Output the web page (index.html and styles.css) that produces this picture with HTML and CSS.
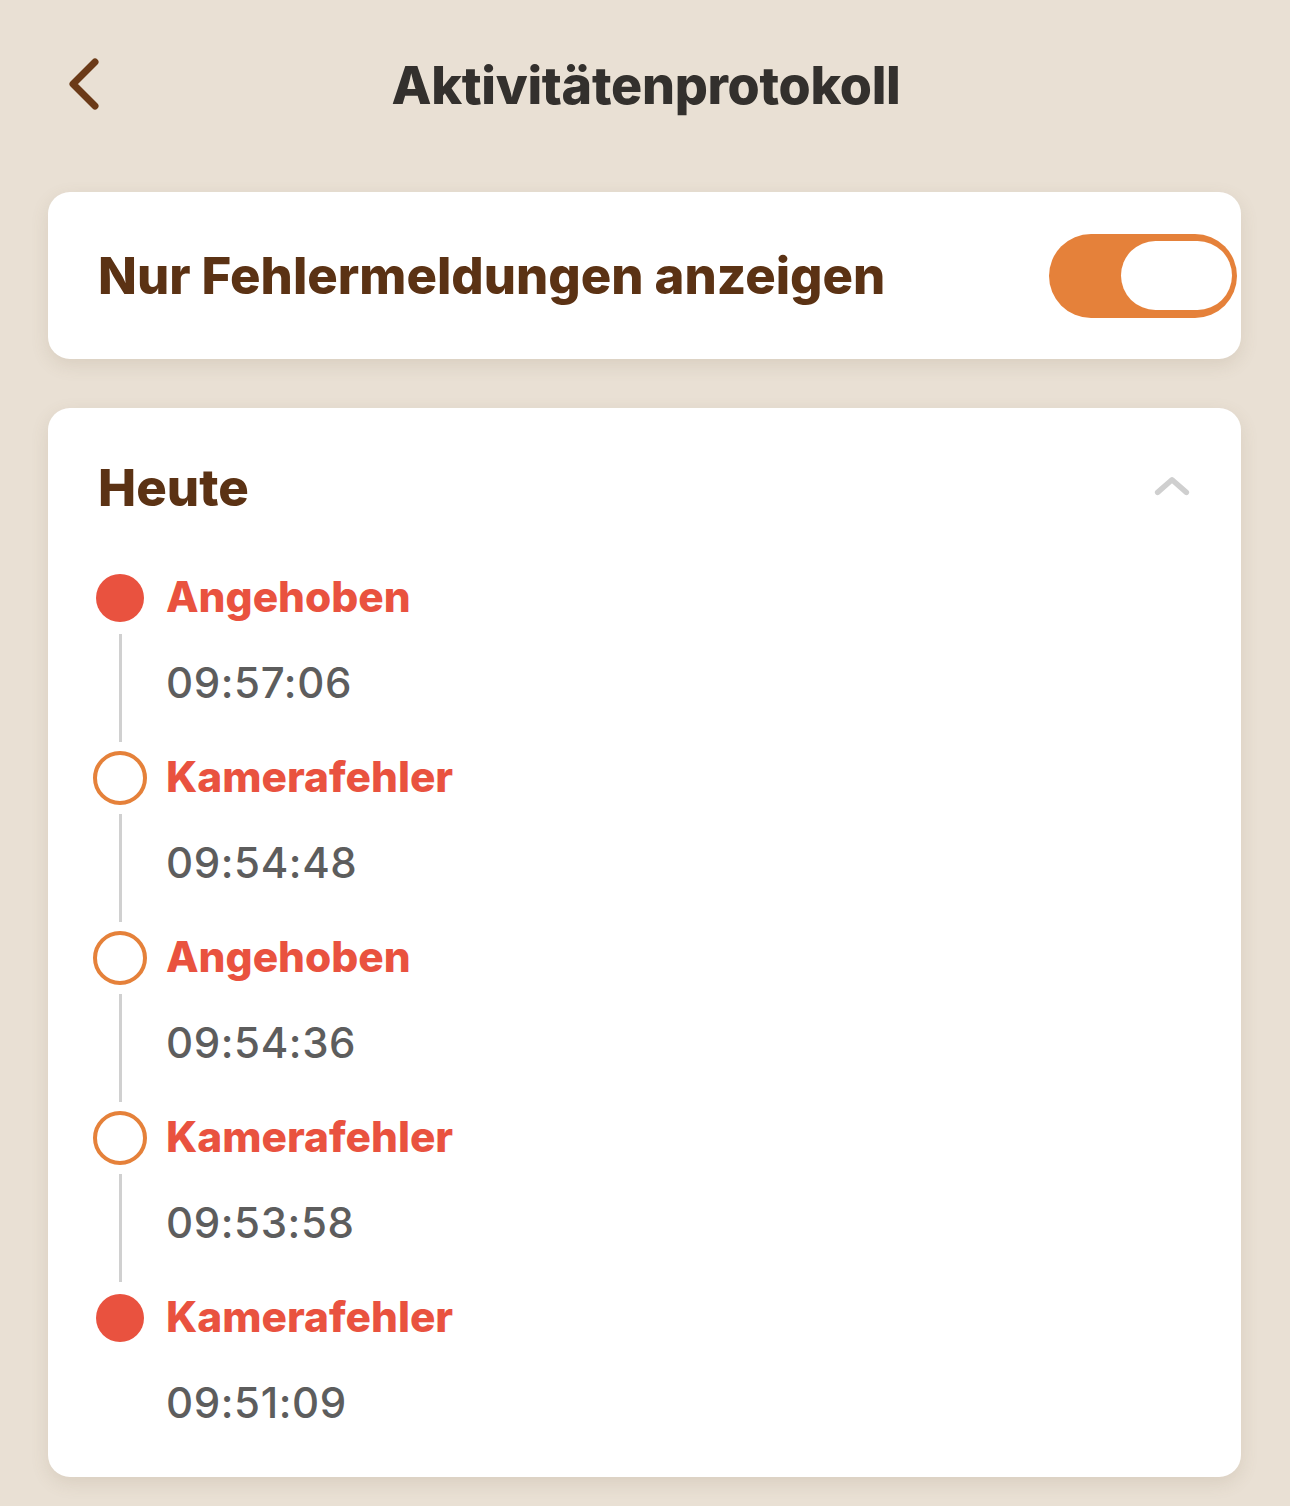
FILE: index.html
```html
<!DOCTYPE html>
<html lang="de">
<head>
  <meta charset="UTF-8">
  <meta name="viewport" content="width=device-width, initial-scale=1.0">
  <title>Aktivitätenprotokoll</title>
  <link rel="stylesheet" href="styles.css">
</head>
<body>
  <!-- Kopfzeile -->
  <header class="topbar">
    <button class="back" aria-label="Zurück">
      <svg width="40" height="56" viewBox="0 0 40 56">
        <path d="M30 6 L8 28 L30 50" fill="none" stroke="#6b3a18" stroke-width="7" stroke-linecap="round" stroke-linejoin="round"/>
      </svg>
    </button>
    <h1 class="title">Aktivitätenprotokoll</h1>
  </header>

  <main class="content">
    <!-- Filter -->
    <section class="card filter">
      <span class="filter-label">Nur Fehlermeldungen anzeigen</span>
      <div class="toggle on"><span class="knob"></span></div>
    </section>

    <!-- Verlauf -->
    <section class="card log">
      <div class="log-head">
        <h2>Heute</h2>
        <svg class="collapse" width="40" height="24" viewBox="0 0 40 24">
          <path d="M4 18 L20 4 L36 18" fill="none" stroke="#cfcfcf" stroke-width="6" stroke-linecap="round" stroke-linejoin="round"/>
        </svg>
      </div>

      <ul class="timeline">
        <li class="event">
          <span class="dot filled"></span>
          <span class="event-name">Angehoben</span>
          <span class="rail"></span>
          <span class="event-time">09:57:06</span>
        </li>
        <li class="event">
          <span class="dot ring"></span>
          <span class="event-name">Kamerafehler</span>
          <span class="rail"></span>
          <span class="event-time">09:54:48</span>
        </li>
        <li class="event">
          <span class="dot ring"></span>
          <span class="event-name">Angehoben</span>
          <span class="rail"></span>
          <span class="event-time">09:54:36</span>
        </li>
        <li class="event">
          <span class="dot ring"></span>
          <span class="event-name">Kamerafehler</span>
          <span class="rail"></span>
          <span class="event-time">09:53:58</span>
        </li>
        <li class="event last">
          <span class="dot filled"></span>
          <span class="event-name">Kamerafehler</span>
          <span class="rail"></span>
          <span class="event-time">09:51:09</span>
        </li>
      </ul>
    </section>
  </main>
</body>
</html>
```

FILE: styles.css
```css
* {
  margin: 0;
  padding: 0;
  box-sizing: border-box;
}

body {
  font-family: Inter, "Noto Sans", sans-serif;
  background: #e9e0d4;
  width: 1290px;
  min-height: 1506px;
}

/* Kopfzeile */
.topbar {
  position: relative;
  height: 168px;
  display: flex;
  align-items: center;
  justify-content: center;
}

.back {
  position: absolute;
  left: 65px;
  top: 56px;
  background: none;
  border: none;
  width: 40px;
  height: 56px;
}

.title {
  font-size: 52px;
  font-weight: 800;
  color: #33302d;
  margin-top: 2px;
  margin-left: 2px;
  letter-spacing: -0.3px;
}

/* Cartes */
.content {
  display: flex;
  flex-direction: column;
  gap: 49px;
  padding: 24px 49px 0 48px;
}

.card {
  background: #fff;
  border-radius: 22px;
  box-shadow: 0 6px 18px rgba(120, 96, 70, 0.14);
}

.filter {
  height: 167px;
  display: flex;
  align-items: center;
  justify-content: space-between;
  padding: 0 4px 0 50px;
}

.filter-label {
  font-size: 50.8px;
  font-weight: 800;
  color: #5b3214;
}

.toggle {
  width: 188px;
  height: 84px;
  border-radius: 42px;
  background: #e5813a;
  display: flex;
  align-items: center;
  justify-content: flex-end;
  padding: 0 5px;
}

.knob {
  width: 111px;
  height: 69px;
  border-radius: 35px;
  background: #fff;
}

/* Journal */
.log {
  padding: 49px 51px 6px 45px;
}

.log-head {
  height: 60px;
  display: flex;
  align-items: center;
  justify-content: space-between;
  padding-left: 5px;
  margin-bottom: 54px;
}

.log-head h2 {
  font-size: 51px;
  font-weight: 800;
  color: #5b3214;
}

.collapse {
  width: 36px;
  margin-right: 0;
}

.timeline {
  list-style: none;
}

.event {
  display: grid;
  grid-template-columns: 54px 1fr;
  grid-template-rows: 54px 126px;
  column-gap: 19px;
  align-items: center;
}

.dot {
  width: 54px;
  height: 54px;
  border-radius: 50%;
  display: flex;
  align-items: center;
  justify-content: center;
}

.dot.filled::before {
  content: "";
  width: 48px;
  height: 48px;
  border-radius: 50%;
  background: #e9523f;
}

.dot.ring {
  border: 4px solid #e5813a;
}

.event-name {
  font-size: 42.4px;
  font-weight: 800;
  color: #e9523f;
  margin-top: -4px;
}

.rail {
  align-self: stretch;
  justify-self: center;
  width: 3px;
  margin: 9px 0;
  background: #d0d0d0;
}

.event.last .rail {
  visibility: hidden;
}

.event-time {
  align-self: start;
  padding-top: 36px;
  line-height: 44px;
  font-size: 42px;
  font-weight: 500;
  color: #5d5d5d;
  letter-spacing: 0.6px;
}
```
